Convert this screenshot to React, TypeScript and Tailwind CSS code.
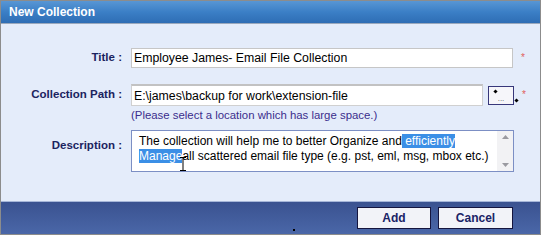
import React from 'react';

const Star = () => <span className="ml-[8px] text-[10px] leading-none text-[#e0605a]">*</span>;

export default function App() {
  return (
    <div className="w-[541px] h-[235px] flex flex-col border border-[#8c8c8c] bg-[#e4ecfa] font-['Liberation_Sans',Arial,sans-serif] overflow-hidden">
      {/* title bar */}
      <div className="h-[23px] shrink-0 flex items-center pl-[8px] bg-gradient-to-b from-[#5896d4] via-[#3b7fc6] to-[#2e6db4] border-b border-[#9aa8bc]">
        <span className="text-[12px] font-bold text-white">New Collection</span>
      </div>

      {/* body */}
      <div className="flex-1 flex flex-col pt-[24px] text-[#1b235f]">
        <div className="flex items-center">
          <label className="w-[121px] text-right text-[11.5px] font-bold">Title :</label>
          <input
            readOnly
            value="Employee James- Email File Collection"
            className="ml-[9px] w-[382px] h-[20px] px-[2px] bg-white border border-[#c6c6c6] text-[12.3px] text-black outline-none"
          />
          <Star />
        </div>

        <div className="flex items-center mt-[16px]">
          <label className="w-[121px] text-right text-[11.5px] font-bold">Collection Path :</label>
          <input
            readOnly
            value="E:\james\backup for work\extension-file"
            className="ml-[9px] w-[352px] h-[22px] px-[2px] bg-white border border-[#d0d0d0] border-t-2 border-t-[#c2c2c2] text-[12.3px] text-black outline-none"
          />
          <div className="relative ml-[5px]">
            <button className="w-[26px] h-[19px] bg-[#f6f6fa] border border-[#37377a] flex items-end justify-center pb-[1px] text-[8px] leading-none text-[#555]">
              ...
            </button>
            <span className="absolute left-[6px] top-[4px] w-[3px] h-[3px] bg-black rotate-45" />
            <span className="absolute left-[27px] top-[13px] w-[3px] h-[3px] bg-black rotate-45" />
          </div>
          <Star />
        </div>
        <div className="pl-[130px] mt-[2px] text-[11.4px] leading-[14px] text-[#3b2d8c]">
          (Please select a location which has large space.)
        </div>

        <div className="flex items-start mt-[8px]">
          <label className="w-[121px] text-right text-[11.5px] font-bold pt-[7px]">Description :</label>
          <div className="relative ml-[9px] w-[383px] h-[42px] bg-white border border-[#7c8fc4] flex">
            <div className="flex-1 pl-[7px] pt-[3px] text-[12px] leading-[15px] text-black whitespace-nowrap">
              <div>
                The collection will help me to better Organize and
                <span className="bg-[#3b8fe6] text-white"> efficiently </span>
              </div>
              <div>
                <span className="bg-[#3b8fe6] text-white">Manage</span>all scattered email file type (e.g. pst, eml, msg, mbox etc.)
              </div>
            </div>
            <div className="w-[16px] h-full bg-[#f2f2f4] flex flex-col items-center justify-between py-[4px]">
              <svg width="7" height="4" viewBox="0 0 7 4"><path d="M0 4L3.5 0L7 4Z" fill="#9a9aa0" /></svg>
              <svg width="7" height="4" viewBox="0 0 7 4"><path d="M0 0L3.5 4L7 0Z" fill="#9a9aa0" /></svg>
            </div>
            <svg className="absolute left-[47px] top-[26px]" width="8" height="14" viewBox="0 0 8 14">
              <path d="M1 0.5H7M1 13.5H7M4 0.5V13.5" stroke="black" strokeWidth="1" fill="none" />
            </svg>
          </div>
        </div>
      </div>

      {/* footer */}
      <div className="relative h-[33px] shrink-0 flex items-center justify-end gap-[7px] pr-[27px] bg-gradient-to-b from-[#3a5290] to-[#4a67a8] border-t border-[#a6b6d8]">
        <button className="w-[74px] h-[22px] bg-[#f2f3f8] border border-[#15153e] text-[12px] font-bold text-[#1a2366]">Add</button>
        <button className="w-[75px] h-[22px] bg-[#f2f3f8] border border-[#15153e] text-[12px] font-bold text-[#1a2366]">Cancel</button>
        <span className="absolute left-[292px] top-[27px] w-[2px] h-[2px] bg-black" />
      </div>
    </div>
  );
}
